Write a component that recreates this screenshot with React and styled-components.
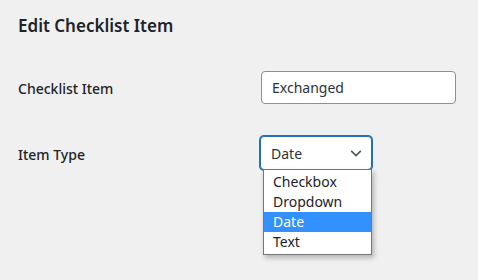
import React, { useState } from "react";
import styled, { createGlobalStyle } from "styled-components";

const GlobalStyle = createGlobalStyle`
  html, body {
    margin: 0;
    padding: 0;
    background: #f0f0f1;
  }
  body {
    font-family: "Noto Sans", "Open Sans", sans-serif;
    color: #1d2327;
  }
`;

const Page = styled.div`
  width: 478px;
  height: 280px;
  padding: 15px 18px 0;
  box-sizing: border-box;
`;

const Title = styled.h2`
  margin: 0;
  font-size: 17px;
  line-height: 22px;
  font-weight: 600;
`;

const Form = styled.div`
  margin-top: 34px;
  display: grid;
  grid-template-columns: 243px 195px;
  grid-auto-rows: auto;
  row-gap: 32px;
  align-items: center;
`;

const Label = styled.label`
  padding-top: 3px;
  font-size: 14px;
  font-weight: 500;
  line-height: 20px;
`;

const TextInput = styled.input`
  box-sizing: border-box;
  width: 195px;
  height: 33px;
  padding: 0 10px;
  border: 1px solid #8c8f94;
  border-radius: 4px;
  background: #fff;
  font-family: inherit;
  font-size: 14px;
  color: #2c3338;
  outline: none;
`;

const SelectWrap = styled.div`
  position: relative;
  width: 112px;
  margin-left: -1px;
`;

const SelectBox = styled.div`
  box-sizing: border-box;
  height: 34px;
  padding: 0 10px;
  border: 1px solid #2271b1;
  box-shadow: 0 0 0 1px #2271b1;
  border-radius: 4px;
  background: #fff;
  display: flex;
  align-items: center;
  justify-content: space-between;
  font-size: 14px;
  color: #2c3338;
`;

const Chevron = styled.svg`
  width: 14px;
  height: 14px;
  margin-right: -2px;
`;

const Menu = styled.ul`
  position: absolute;
  top: 33px;
  left: 3px;
  right: 0;
  margin: 0;
  padding: 2px 0;
  list-style: none;
  background: #fff;
  border: 1px solid #767676;
  box-shadow: 2px 3px 5px rgba(0, 0, 0, 0.25);
`;

const Option = styled.li`
  height: 20px;
  line-height: 20px;
  padding: 0 9px;
  font-size: 14px;
  color: ${(p) => (p.$active ? "#fff" : "#1d2327")};
  background: ${(p) => (p.$active ? "#3391ff" : "transparent")};
`;

const options = ["Checkbox", "Dropdown", "Date", "Text"];

export default function App() {
  const [value, setValue] = useState("Date");

  return (
    <Page>
      <GlobalStyle />
      <Title>Edit Checklist Item</Title>
      <Form>
        <Label>Checklist Item</Label>
        <TextInput defaultValue="Exchanged" />
        <Label>Item Type</Label>
        <SelectWrap>
          <SelectBox>
            <span>{value}</span>
            <Chevron viewBox="0 0 16 16">
              <path d="M2.5 5.5l5.5 5.5 5.5-5.5" fill="none" stroke="#50575e" strokeWidth="2" />
            </Chevron>
          </SelectBox>
          <Menu>
            {options.map((o) => (
              <Option key={o} $active={o === value} onClick={() => setValue(o)}>
                {o}
              </Option>
            ))}
          </Menu>
        </SelectWrap>
      </Form>
    </Page>
  );
}
